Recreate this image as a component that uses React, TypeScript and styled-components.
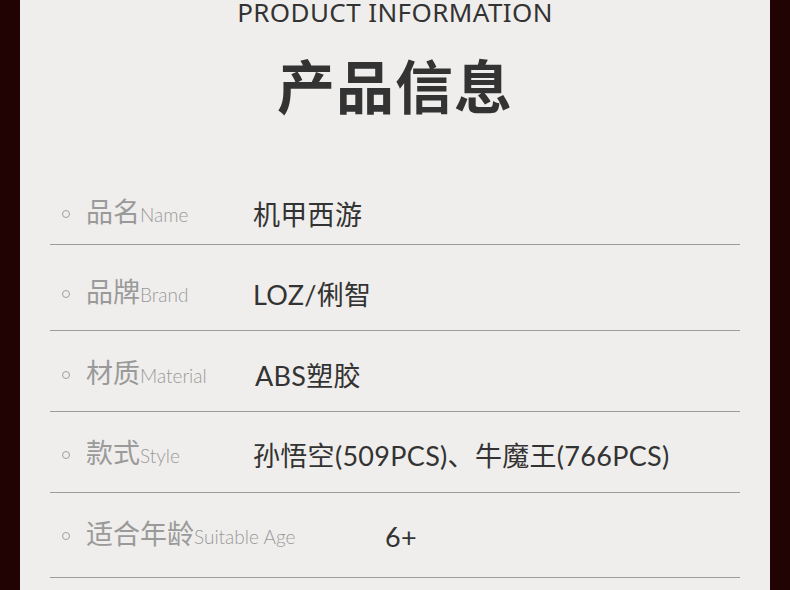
import styled, { createGlobalStyle } from 'styled-components';

const GlobalStyle = createGlobalStyle`
    html, body {
        margin: 0;
        padding: 0;
        background: #200302;
    }
    body {
        font-family: 'Noto Sans', 'Noto Sans CJK SC', sans-serif;
    }
`;

type Spec = {
    cn: string;
    en: string;
    value: string;
    height: number;
    bottom: number;
    indent?: number;
};

const specs: Spec[] = [
    { cn: '品名', en: 'Name', value: '机甲西游', height: 86, bottom: 13 },
    { cn: '品牌', en: 'Brand', value: 'LOZ/俐智', height: 86, bottom: 19 },
    { cn: '材质', en: 'Material', value: 'ABS塑胶', height: 81, bottom: 19, indent: 2 },
    { cn: '款式', en: 'Style', value: '孙悟空(509PCS)、牛魔王(766PCS)', height: 81, bottom: 20 },
    { cn: '适合年龄', en: 'Suitable Age', value: '6+', height: 85, bottom: 24, indent: 132 },
];

const App = () => {
    return (
        <Page>
            <GlobalStyle />
            <Panel>
                <Eyebrow>PRODUCT INFORMATION</Eyebrow>
                <Title>产品信息</Title>
                <SpecList>
                    {specs.map((s) => (
                        <SpecRow key={s.cn} $height={s.height} $bottom={s.bottom}>
                            <Bullet />
                            <Label>
                                {s.cn}
                                <LabelEn>{s.en}</LabelEn>
                            </Label>
                            <Value $indent={s.indent ?? 0}>{s.value}</Value>
                        </SpecRow>
                    ))}
                </SpecList>
            </Panel>
        </Page>
    );
};

export default App;

const Page = styled.div`
    width: 790px;
    height: 590px;
    padding: 0 20px;
    box-sizing: border-box;
    background: #200302;
    overflow: hidden;
`;

const Panel = styled.div`
    height: 100%;
    background: #efeeec;
    display: flex;
    flex-direction: column;
    align-items: center;
`;

const Eyebrow = styled.div`
    margin-top: 0;
    font-family: 'Noto Sans', sans-serif;
    font-size: 26px;
    line-height: 24px;
    color: #333333;
    letter-spacing: 0.4px;
`;

const Title = styled.h1`
    margin: 22px 0 0;
    font-family: 'Noto Sans CJK SC', sans-serif;
    font-weight: 700;
    font-size: 58px;
    line-height: 76px;
    color: #333333;
    letter-spacing: 1px;
`;

const SpecList = styled.div`
    align-self: stretch;
    margin: 0 30px;
    padding-top: 37px;
    display: flex;
    flex-direction: column;
`;

const SpecRow = styled.div<{ $height: number; $bottom: number }>`
    height: ${(p) => p.$height}px;
    box-sizing: border-box;
    padding-bottom: ${(p) => p.$bottom}px;
    border-bottom: 1.5px solid #9c9c9c;
    display: flex;
    align-items: flex-end;
`;

const Bullet = styled.span`
    width: 6px;
    height: 6px;
    border: 1.5px solid #9e9e9e;
    border-radius: 50%;
    margin: 0 16px 13px 12px;
    flex-shrink: 0;
`;

const Label = styled.div`
    width: 167px;
    flex-shrink: 0;
    white-space: nowrap;
    font-family: 'Noto Sans CJK SC', sans-serif;
    font-size: 27px;
    line-height: 32px;
    color: #9a9a9a;
`;

const LabelEn = styled.span`
    font-family: 'Lato', sans-serif;
    font-weight: 300;
    font-size: 19px;
    color: #9a9a9a;
`;

const Value = styled.div<{ $indent: number }>`
    margin-left: ${(p) => p.$indent}px;
    white-space: nowrap;
    font-family: 'Lato', 'Noto Sans CJK SC', sans-serif;
    font-weight: 400;
    font-size: 27px;
    line-height: 32px;
    color: #333333;
    letter-spacing: 0.3px;
`;
